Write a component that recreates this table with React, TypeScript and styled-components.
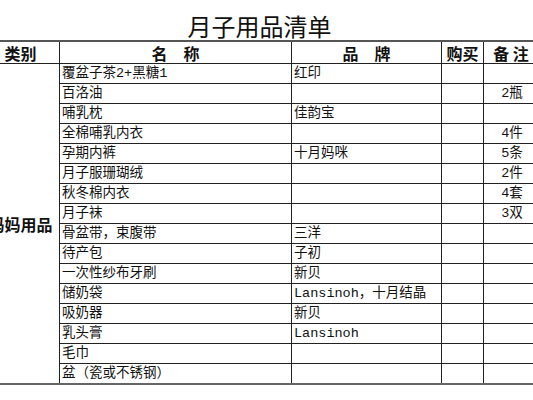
import React from 'react'
import styled, { createGlobalStyle } from 'styled-components'

const GlobalStyle = createGlobalStyle`
  html, body {
    margin: 0;
    padding: 0;
    background: #fff;
    overflow: hidden;
  }
`

const Page = styled.div`
  width: 533px;
  height: 400px;
  overflow: hidden;
  background: #fff;
`

const Sheet = styled.div`
  margin-left: -19px;
  width: 557px;
`

const Title = styled.div`
  height: 40px;
  display: flex;
  align-items: flex-end;
  justify-content: center;
  font-family: "Noto Sans CJK SC", sans-serif;
  font-size: 24px;
  line-height: 28px;
  color: #111;
`

const Grid = styled.table`
  border-collapse: collapse;
  table-layout: fixed;
  width: 557px;
  border-top: 2px solid #555;
  border-bottom: 2px solid #666;
`

const HeadCell = styled.th`
  height: 21px;
  padding: 0;
  border: 1px solid #222;
  border-top: 2px solid #555;
  font-family: "Noto Sans CJK SC", sans-serif;
  font-size: 16px;
  font-weight: bold;
  line-height: 20px;
  color: #111;
  text-align: center;
  vertical-align: bottom;
  white-space: nowrap;
`

const CategoryCell = styled.td`
  padding: 0;
  border: 1px solid #222;
  border-bottom: 2px solid #666;
  font-family: "Noto Sans CJK SC", sans-serif;
  font-size: 16px;
  font-weight: bold;
  color: #111;
  text-align: center;
  vertical-align: middle;
  white-space: nowrap;
`

const Cell = styled.td<{ $center?: boolean }>`
  height: 19px;
  padding: 0 0 0 2px;
  border: 1px solid #222;
  font-family: "Liberation Mono", "Noto Sans CJK SC", monospace;
  font-size: 13.5px;
  line-height: 18px;
  color: #111;
  text-align: ${p => (p.$center ? 'center' : 'left')};
  vertical-align: bottom;
  white-space: nowrap;
  overflow: hidden;
`

type Item = { name: string; brand?: string; note?: string }

const items: Item[] = [
  { name: '覆盆子茶2+黑糖1', brand: '红印' },
  { name: '百洛油', note: '2瓶' },
  { name: '哺乳枕', brand: '佳韵宝' },
  { name: '全棉哺乳内衣', note: '4件' },
  { name: '孕期内裤', brand: '十月妈咪', note: '5条' },
  { name: '月子服珊瑚绒', note: '2件' },
  { name: '秋冬棉内衣', note: '4套' },
  { name: '月子袜', note: '3双' },
  { name: '骨盆带，束腹带', brand: '三洋' },
  { name: '待产包', brand: '子初' },
  { name: '一次性纱布牙刷', brand: '新贝' },
  { name: '储奶袋', brand: 'Lansinoh，十月结晶' },
  { name: '吸奶器', brand: '新贝' },
  { name: '乳头膏', brand: 'Lansinoh' },
  { name: '毛巾' },
  { name: '盆（瓷或不锈钢）' },
]

const App = () => {
  return (
    <Page>
      <GlobalStyle />
      <Sheet>
        <Title>月子用品清单</Title>
        <Grid>
          <colgroup>
            <col style={{ width: 78 }} />
            <col style={{ width: 232 }} />
            <col style={{ width: 150 }} />
            <col style={{ width: 42 }} />
            <col style={{ width: 55 }} />
          </colgroup>
          <thead>
            <tr>
              <HeadCell>类别</HeadCell>
              <HeadCell>名　称</HeadCell>
              <HeadCell>品　牌</HeadCell>
              <HeadCell>购买</HeadCell>
              <HeadCell>备 注</HeadCell>
            </tr>
          </thead>
          <tbody>
            {items.map((item, i) => (
              <tr key={item.name}>
                {i === 0 && <CategoryCell rowSpan={items.length}>妈妈用品</CategoryCell>}
                <Cell>{item.name}</Cell>
                <Cell>{item.brand}</Cell>
                <Cell />
                <Cell $center>{item.note}</Cell>
              </tr>
            ))}
          </tbody>
        </Grid>
      </Sheet>
    </Page>
  )
}

export default App
